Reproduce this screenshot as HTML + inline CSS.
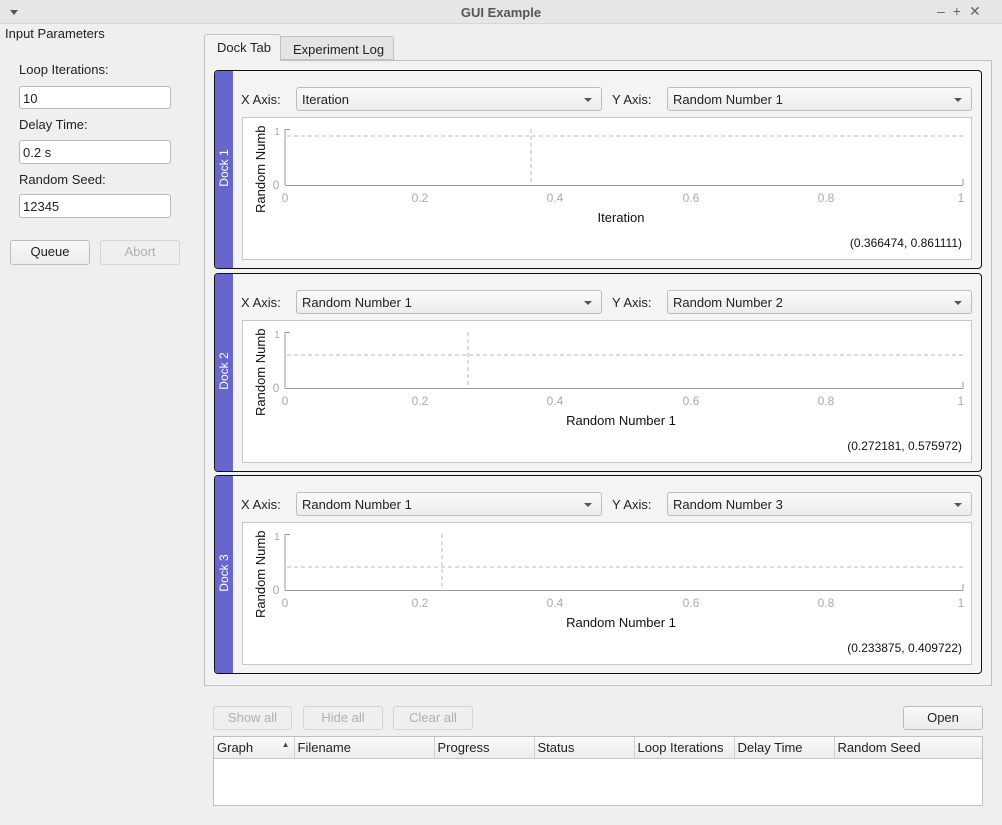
<!DOCTYPE html>
<html><head><style>
*{box-sizing:border-box;margin:0;padding:0}
body{width:1002px;height:825px;background:#efefef;font-family:"Liberation Sans",sans-serif;font-size:13px;color:#222;position:relative;overflow:hidden}
.a{position:absolute}
.inp{position:absolute;background:#fff;border:1px solid #b8b8b8;border-radius:3px;padding:4px 0 0 3px;font-size:13px}
.btn{position:absolute;border:1px solid #bcbcbc;border-radius:3px;background:linear-gradient(#f8f8f8,#ececec);text-align:center;line-height:22px;font-size:13px}
.dis{color:#b0b0b0;border-color:#d4d4d4;background:#efefef}
.combo{position:absolute;border:1px solid #bcbcbc;border-radius:3px;background:linear-gradient(#fafafa,#ececec);height:24px;padding:4px 0 0 5px}
.combo:after{content:"";position:absolute;right:9px;top:10px;border:4px solid transparent;border-top:4px solid #555;border-bottom:0}
.dock{position:absolute;left:214px;width:768px;height:199px;border:1px solid #111;border-radius:4px;background:#f4f4f4;overflow:hidden}
.bar{position:absolute;left:0;top:0;width:18px;height:100%;background:#6666cc}
.bar span{position:absolute;left:-12px;top:90px;width:42px;color:#fff;transform:rotate(-90deg);font-size:12px;text-align:center}
.plot{position:absolute;left:27px;top:46px;width:730px;height:143px;background:#fff;border:1px solid #c8c8c8}
th{font-weight:normal;text-align:left;padding-left:3px;border-right:1px solid #d0d0d0;border-bottom:1px solid #c8c8c8;background:linear-gradient(#fafafa,#ececec);height:21px}
</style></head><body>
<div class="a" style="left:0;top:0;width:1002px;height:24px;background:#e6e6e6;border-bottom:1px solid #d6d6d6"></div>
<div class="a" style="left:10px;top:10px;border:4px solid transparent;border-top:5px solid #555;border-bottom:0"></div>
<div class="a" style="left:0;top:5px;width:1002px;text-align:center;font-weight:bold;color:#555">GUI Example</div>
<div class="a" style="left:937px;top:3px;color:#666;font-size:14px;letter-spacing:8px">–+✕</div>
<div class="a" style="left:5px;top:26px">Input Parameters</div>
<div class="a" style="left:19px;top:62px">Loop Iterations:</div>
<div class="inp" style="left:19px;top:86px;width:152px;height:23px">10</div>
<div class="a" style="left:19px;top:117px">Delay Time:</div>
<div class="inp" style="left:19px;top:140px;width:152px;height:24px">0.2 s</div>
<div class="a" style="left:19px;top:172px">Random Seed:</div>
<div class="inp" style="left:19px;top:194px;width:152px;height:24px">12345</div>
<div class="btn" style="left:10px;top:240px;width:80px;height:25px">Queue</div>
<div class="btn dis" style="left:100px;top:240px;width:80px;height:25px">Abort</div>
<div class="a" style="left:204px;top:60px;width:788px;height:626px;border:1px solid #c0c0c0;background:#f2f2f2"></div>
<div class="a" style="left:204px;top:34px;width:77px;height:27px;border:1px solid #c0c0c0;border-bottom:none;border-radius:3px 3px 0 0;background:#f2f2f2;padding:5px 0 0 12px">Dock Tab</div>
<div class="a" style="left:280px;top:36px;width:114px;height:24px;border:1px solid #c0c0c0;border-radius:3px 3px 0 0;background:#e4e4e4;padding:5px 0 0 12px">Experiment Log</div>

<div class="dock" style="top:70px"><div class="bar"><span>Dock 1</span></div>
<div class="a" style="left:26px;top:21px">X Axis:</div><div class="combo" style="left:81px;top:16px;width:306px">Iteration</div>
<div class="a" style="left:397px;top:21px">Y Axis:</div><div class="combo" style="left:452px;top:16px;width:305px">Random Number 1</div>
<div class="plot"><svg width="730" height="143" font-family="Liberation Sans" font-size="12">
<g stroke="#999"><line x1="42" y1="11" x2="42" y2="67"/><line x1="42" y1="67.5" x2="720" y2="67.5"/><line x1="720" y1="61" x2="720" y2="67"/><line x1="42" y1="11.5" x2="47" y2="11.5"/></g>
<line x1="44" y1="18" x2="720" y2="18" stroke="#bbb" stroke-dasharray="4,3"/><line x1="288" y1="11" x2="288" y2="67" stroke="#bbb" stroke-dasharray="4,3"/>
<g fill="#aaa" text-anchor="middle"><text x="42" y="84">0</text><text x="177" y="84">0.2</text><text x="312" y="84">0.4</text><text x="448" y="84">0.6</text><text x="583" y="84">0.8</text><text x="718" y="84">1</text><text x="33" y="71">0</text><text x="34" y="17" font-size="10">1</text></g>
<text x="378" y="104" text-anchor="middle" font-size="13" fill="#111">Iteration</text>
<text transform="translate(22,95) rotate(-90)" font-size="13" fill="#111">Random Numb</text>
<text x="719" y="129" text-anchor="end" fill="#111">(0.366474, 0.861111)</text></svg></div></div>

<div class="dock" style="top:273px"><div class="bar"><span>Dock 2</span></div>
<div class="a" style="left:26px;top:21px">X Axis:</div><div class="combo" style="left:81px;top:16px;width:306px">Random Number 1</div>
<div class="a" style="left:397px;top:21px">Y Axis:</div><div class="combo" style="left:452px;top:16px;width:305px">Random Number 2</div>
<div class="plot"><svg width="730" height="143" font-family="Liberation Sans" font-size="12">
<g stroke="#999"><line x1="42" y1="11" x2="42" y2="67"/><line x1="42" y1="67.5" x2="720" y2="67.5"/><line x1="720" y1="61" x2="720" y2="67"/><line x1="42" y1="11.5" x2="47" y2="11.5"/></g>
<line x1="44" y1="34" x2="720" y2="34" stroke="#bbb" stroke-dasharray="4,3"/><line x1="225" y1="11" x2="225" y2="67" stroke="#bbb" stroke-dasharray="4,3"/>
<g fill="#aaa" text-anchor="middle"><text x="42" y="84">0</text><text x="177" y="84">0.2</text><text x="312" y="84">0.4</text><text x="448" y="84">0.6</text><text x="583" y="84">0.8</text><text x="718" y="84">1</text><text x="33" y="71">0</text><text x="34" y="17" font-size="10">1</text></g>
<text x="378" y="104" text-anchor="middle" font-size="13" fill="#111">Random Number 1</text>
<text transform="translate(22,95) rotate(-90)" font-size="13" fill="#111">Random Numb</text>
<text x="719" y="129" text-anchor="end" fill="#111">(0.272181, 0.575972)</text></svg></div></div>

<div class="dock" style="top:475px"><div class="bar"><span>Dock 3</span></div>
<div class="a" style="left:26px;top:21px">X Axis:</div><div class="combo" style="left:81px;top:16px;width:306px">Random Number 1</div>
<div class="a" style="left:397px;top:21px">Y Axis:</div><div class="combo" style="left:452px;top:16px;width:305px">Random Number 3</div>
<div class="plot"><svg width="730" height="143" font-family="Liberation Sans" font-size="12">
<g stroke="#999"><line x1="42" y1="11" x2="42" y2="67"/><line x1="42" y1="67.5" x2="720" y2="67.5"/><line x1="720" y1="61" x2="720" y2="67"/><line x1="42" y1="11.5" x2="47" y2="11.5"/></g>
<line x1="44" y1="44" x2="720" y2="44" stroke="#bbb" stroke-dasharray="4,3"/><line x1="199" y1="11" x2="199" y2="67" stroke="#bbb" stroke-dasharray="4,3"/>
<g fill="#aaa" text-anchor="middle"><text x="42" y="84">0</text><text x="177" y="84">0.2</text><text x="312" y="84">0.4</text><text x="448" y="84">0.6</text><text x="583" y="84">0.8</text><text x="718" y="84">1</text><text x="33" y="71">0</text><text x="34" y="17" font-size="10">1</text></g>
<text x="378" y="104" text-anchor="middle" font-size="13" fill="#111">Random Number 1</text>
<text transform="translate(22,95) rotate(-90)" font-size="13" fill="#111">Random Numb</text>
<text x="719" y="129" text-anchor="end" fill="#111">(0.233875, 0.409722)</text></svg></div></div>

<div class="btn dis" style="left:213px;top:706px;width:79px;height:24px">Show all</div>
<div class="btn dis" style="left:303px;top:706px;width:80px;height:24px">Hide all</div>
<div class="btn dis" style="left:393px;top:706px;width:80px;height:24px">Clear all</div>
<div class="btn" style="left:903px;top:706px;width:80px;height:24px">Open</div>
<div class="a" style="left:213px;top:736px;width:770px;height:70px;background:#fff;border:1px solid #c0c0c0">
<table style="border-collapse:collapse;font-size:13px;width:768px"><tr>
<th style="width:80px">Graph <span style="float:right;font-size:8px;margin-right:4px;color:#444">▲</span></th><th style="width:140px">Filename</th><th style="width:100px">Progress</th><th style="width:100px">Status</th><th style="width:100px">Loop Iterations</th><th style="width:100px">Delay Time</th><th style="border-right:none">Random Seed</th></tr></table></div>
</body></html>
